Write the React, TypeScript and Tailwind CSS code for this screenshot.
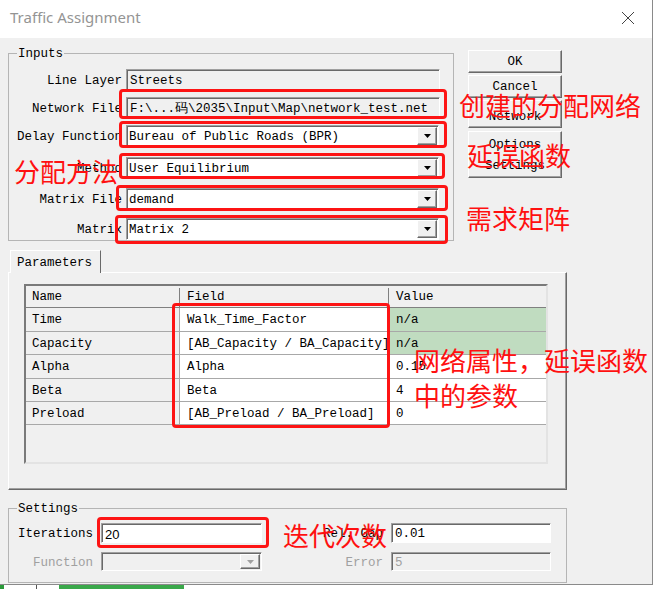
import React from 'react';

const mono = "font-['Liberation_Mono',monospace] text-[12.5px] leading-none";
const cjk = "font-['Noto_Sans_CJK_SC','Noto_Sans',sans-serif]";

const sunken =
    'border border-t-[#a0a0a0] border-l-[#a0a0a0] border-b-white border-r-white shadow-[inset_1px_1px_0_#696969]';
const raised =
    'border border-t-white border-l-white border-b-[#696969] border-r-[#696969] shadow-[inset_-1px_-1px_0_#a0a0a0]';

function Arrow({ disabled }: { disabled?: boolean }) {
    return (
        <div className={`${raised} w-[20px] h-full bg-[#f0f0f0] flex items-center justify-center`}>
            <svg width="7" height="4" viewBox="0 0 7 4">
                <polygon points="0,0 7,0 3.5,4" fill={disabled ? '#a0a0a0' : '#000'} />
            </svg>
        </div>
    );
}

function Combo({ value, disabled, className }: { value?: string; disabled?: boolean; className: string }) {
    return (
        <div className={`${sunken} ${disabled ? 'bg-[#f0f0f0]' : 'bg-white'} flex items-stretch p-[1px] pl-[2px] ${className}`}>
            <div className={`flex-1 flex items-center pt-[3px] ${mono}`}>{value}</div>
            <Arrow disabled={disabled} />
        </div>
    );
}

function Field({ value, className, gray }: { value: string; className: string; gray?: boolean }) {
    return (
        <div className={`${sunken} ${gray ? 'bg-[#f0f0f0]' : 'bg-white'} flex items-center pl-[3px] pt-[3px] overflow-hidden whitespace-nowrap ${className}`}>
            {value}
        </div>
    );
}

function Button({ children, className }: { children: React.ReactNode; className: string }) {
    return (
        <div className={`${raised} ${mono} bg-[#f0f0f0] w-[94px] flex flex-col items-center justify-center gap-[8px] ${className}`}>
            {children}
        </div>
    );
}

const inputRows = [
    { label: 'Line Layer', kind: 'field', value: 'Streets', mt: 'mt-[8px]', h: 'h-[21px]' },
    { label: 'Network File', kind: 'field', value: 'F:\\...码\\2035\\Input\\Map\\network_test.net', mt: 'mt-[7px]', h: 'h-[21px]' },
    { label: 'Delay Function', kind: 'combo', value: 'Bureau of Public Roads (BPR)', mt: 'mt-[7px]', h: 'h-[22px]' },
    { label: 'Method', kind: 'combo', value: 'User Equilibrium', mt: 'mt-[10px]', h: 'h-[22px]' },
    { label: 'Matrix File', kind: 'combo', value: 'demand', mt: 'mt-[9px]', h: 'h-[22px]' },
    { label: 'Matrix', kind: 'combo', value: 'Matrix 2', mt: 'mt-[8px]', h: 'h-[22px]' },
];

const params = [
    { name: 'Time', field: 'Walk_Time_Factor', value: 'n/a', green: true, h: 'h-[24px]' },
    { name: 'Capacity', field: '[AB_Capacity / BA_Capacity]', value: 'n/a', green: true, h: 'h-[23px]' },
    { name: 'Alpha', field: 'Alpha', value: '0.15', green: false, h: 'h-[24px]' },
    { name: 'Beta', field: 'Beta', value: '4', green: false, h: 'h-[23px]' },
    { name: 'Preload', field: '[AB_Preload / BA_Preload]', value: '0', green: false, h: 'h-[23px]' },
];

const redBoxes = [
    'left-[119px] top-[89px] w-[328px] h-[30px]',
    'left-[119px] top-[121px] w-[328px] h-[27px]',
    'left-[119px] top-[153px] w-[326px] h-[26px]',
    'left-[116px] top-[185px] w-[332px] h-[26px]',
    'left-[115px] top-[215px] w-[333px] h-[29px]',
    'left-[172px] top-[303px] w-[218px] h-[125px]',
    'left-[97px] top-[517px] w-[172px] h-[31px]',
];

const notes = [
    { text: '创建的分配网络', cls: 'left-[459px] top-[92px]' },
    { text: '延误函数', cls: 'left-[467px] top-[142px]' },
    { text: '分配方法', cls: 'left-[14px] top-[158px]' },
    { text: '需求矩阵', cls: 'left-[466px] top-[205px]' },
    { text: '网络属性，延误函数', cls: 'left-[414px] top-[347px]' },
    { text: '中的参数', cls: 'left-[414px] top-[382px]' },
    { text: '迭代次数', cls: 'left-[283px] top-[522px]' },
];

export default function App() {
    return (
        <div className="relative w-[656px] h-[589px] bg-white overflow-hidden">
            <div className="w-[653px] border-r border-b border-[#8a8a8a] flex flex-col">
                {/* Title bar */}
                <div className="h-[38px] bg-white flex items-center justify-between pl-[10px] pr-[17px] pb-[3px]">
                    <span className="font-['Noto_Sans',sans-serif] text-[15px] text-[#949494]">Traffic Assignment</span>
                    <svg width="14" height="14" viewBox="0 0 14 14" className="mt-[1px]">
                        <path d="M1 1L13 13M13 1L1 13" stroke="#444" strokeWidth="1" />
                    </svg>
                </div>

                {/* Dialog body */}
                <div className={`h-[546px] bg-[#f0f0f0] pt-[7px] pl-[8px] text-black ${mono}`}>
                    <div className="flex">
                        <fieldset className="w-[446px] h-[196px] border border-[#b5b5b5]">
                            <legend className="ml-[8px] px-[1px] leading-[14px] pt-[2px]">Inputs</legend>
                            {inputRows.map((r) => (
                                <div key={r.label} className={`flex items-stretch ${r.mt} ${r.h}`}>
                                    <div className="w-[113px] flex items-center justify-end pt-[3px] whitespace-nowrap">{r.label}</div>
                                    {r.kind === 'field' ? (
                                        <Field value={r.value} gray className="ml-[4px] w-[314px]" />
                                    ) : (
                                        <Combo value={r.value} className="ml-[4px] w-[313px]" />
                                    )}
                                </div>
                            ))}
                        </fieldset>

                        <div className="ml-[14px] mt-[5px] flex flex-col">
                            <Button className="h-[23px] pt-[2px]">OK</Button>
                            <Button className="h-[23px] mt-[2px] pt-[2px]">Cancel</Button>
                            <Button className="h-[28px] mt-[2px] pt-[6px]">Network</Button>
                            <Button className="h-[47px] mt-[3px] pt-[2px]">
                                <span>Options</span>
                                <span>Settings</span>
                            </Button>
                        </div>
                    </div>

                    {/* Parameters tab */}
                    <div className="mt-[9px] w-[559px]">
                        <div className="ml-[2px] w-[91px] h-[23px] -mb-[1px] relative z-10 bg-[#f0f0f0] border-t border-l border-t-white border-l-white border-r border-r-[#696969] flex items-center pl-[6px] pt-[2px]">
                            Parameters
                        </div>
                        <div className="h-[218px] border border-t-white border-l-white border-b-[#696969] border-r-[#696969] shadow-[inset_-1px_-1px_0_#a0a0a0] pt-[11px] pl-[15px]">
                            <div className="w-[524px] h-[180px] border-2 border-t-[#7a7a7a] border-l-[#7a7a7a] border-b-[#e3e3e3] border-r-[#e3e3e3] flex flex-col bg-[#f0f0f0]">
                                <div className="flex h-[22px] border-b border-b-[#808080] shrink-0 pt-[2px]">
                                    <div className="w-[154px] border-r border-[#808080] flex items-center pl-[6px]">Name</div>
                                    <div className="w-[209px] border-r border-[#808080] flex items-center pl-[7px]">Field</div>
                                    <div className="flex-1 flex items-center pl-[7px]">Value</div>
                                </div>
                                {params.map((p) => (
                                    <div key={p.name} className={`flex ${p.h} border-b border-b-[#a8a8a8] shrink-0`}>
                                        <div className="w-[154px] border-r border-[#a8a8a8] flex items-center pl-[6px] pt-[2px]">{p.name}</div>
                                        <div className="w-[209px] border-r border-[#a8a8a8] bg-white flex items-center pl-[7px] pt-[2px] overflow-hidden whitespace-nowrap">{p.field}</div>
                                        <div className={`flex-1 flex items-center pl-[7px] pt-[2px] ${p.green ? 'bg-[#c0dcc0]' : 'bg-white'}`}>{p.value}</div>
                                    </div>
                                ))}
                            </div>
                        </div>
                    </div>

                    {/* Settings */}
                    <fieldset className="mt-[10px] w-[559px] h-[83px] border border-[#b5b5b5]">
                        <legend className="ml-[8px] px-[1px] leading-[14px] pt-[2px]">Settings</legend>
                        <div className="flex items-stretch h-[20px] mt-[7px]">
                            <div className="w-[84px] flex items-center justify-end pt-[3px]">Iterations</div>
                            <Field value="20" className="ml-[8px] w-[161px] font-['Liberation_Sans',sans-serif] text-[13px]" />
                            <div className="w-[121px] flex items-center justify-end pt-[3px]">Rel. Gap</div>
                            <Field value="0.01" className="ml-[8px] w-[160px]" />
                        </div>
                        <div className="flex items-stretch h-[19px] mt-[9px] text-[#a0a0a0]">
                            <div className="w-[84px] flex items-center justify-end pt-[3px]">Function</div>
                            <Combo disabled className="ml-[8px] w-[161px]" />
                            <div className="w-[121px] flex items-center justify-end pt-[3px]">Error</div>
                            <Field value="5" gray className="ml-[8px] w-[160px]" />
                        </div>
                    </fieldset>
                </div>
            </div>

            {/* strip of what lies behind the dialog */}
            <div className="flex h-[4px] items-stretch">
                <div className="w-[4px] bg-[#2a9a3a]" />
                <div className="w-[32px]" />
                <div className="w-[1px] bg-[#555]" />
                <div className="w-[22px]" />
                <div className="w-[125px] bg-[#3aa84a]" />
            </div>

            {/* annotations */}
            {redBoxes.map((c) => (
                <div key={c} className={`absolute ${c} border-[3px] border-[#fd1414] rounded-[4px] pointer-events-none`} />
            ))}
            {notes.map((n) => (
                <div key={n.text} className={`absolute ${n.cls} ${cjk} text-[26px] leading-[26px] text-[#ff1010] whitespace-nowrap`}>
                    {n.text}
                </div>
            ))}
        </div>
    );
}
